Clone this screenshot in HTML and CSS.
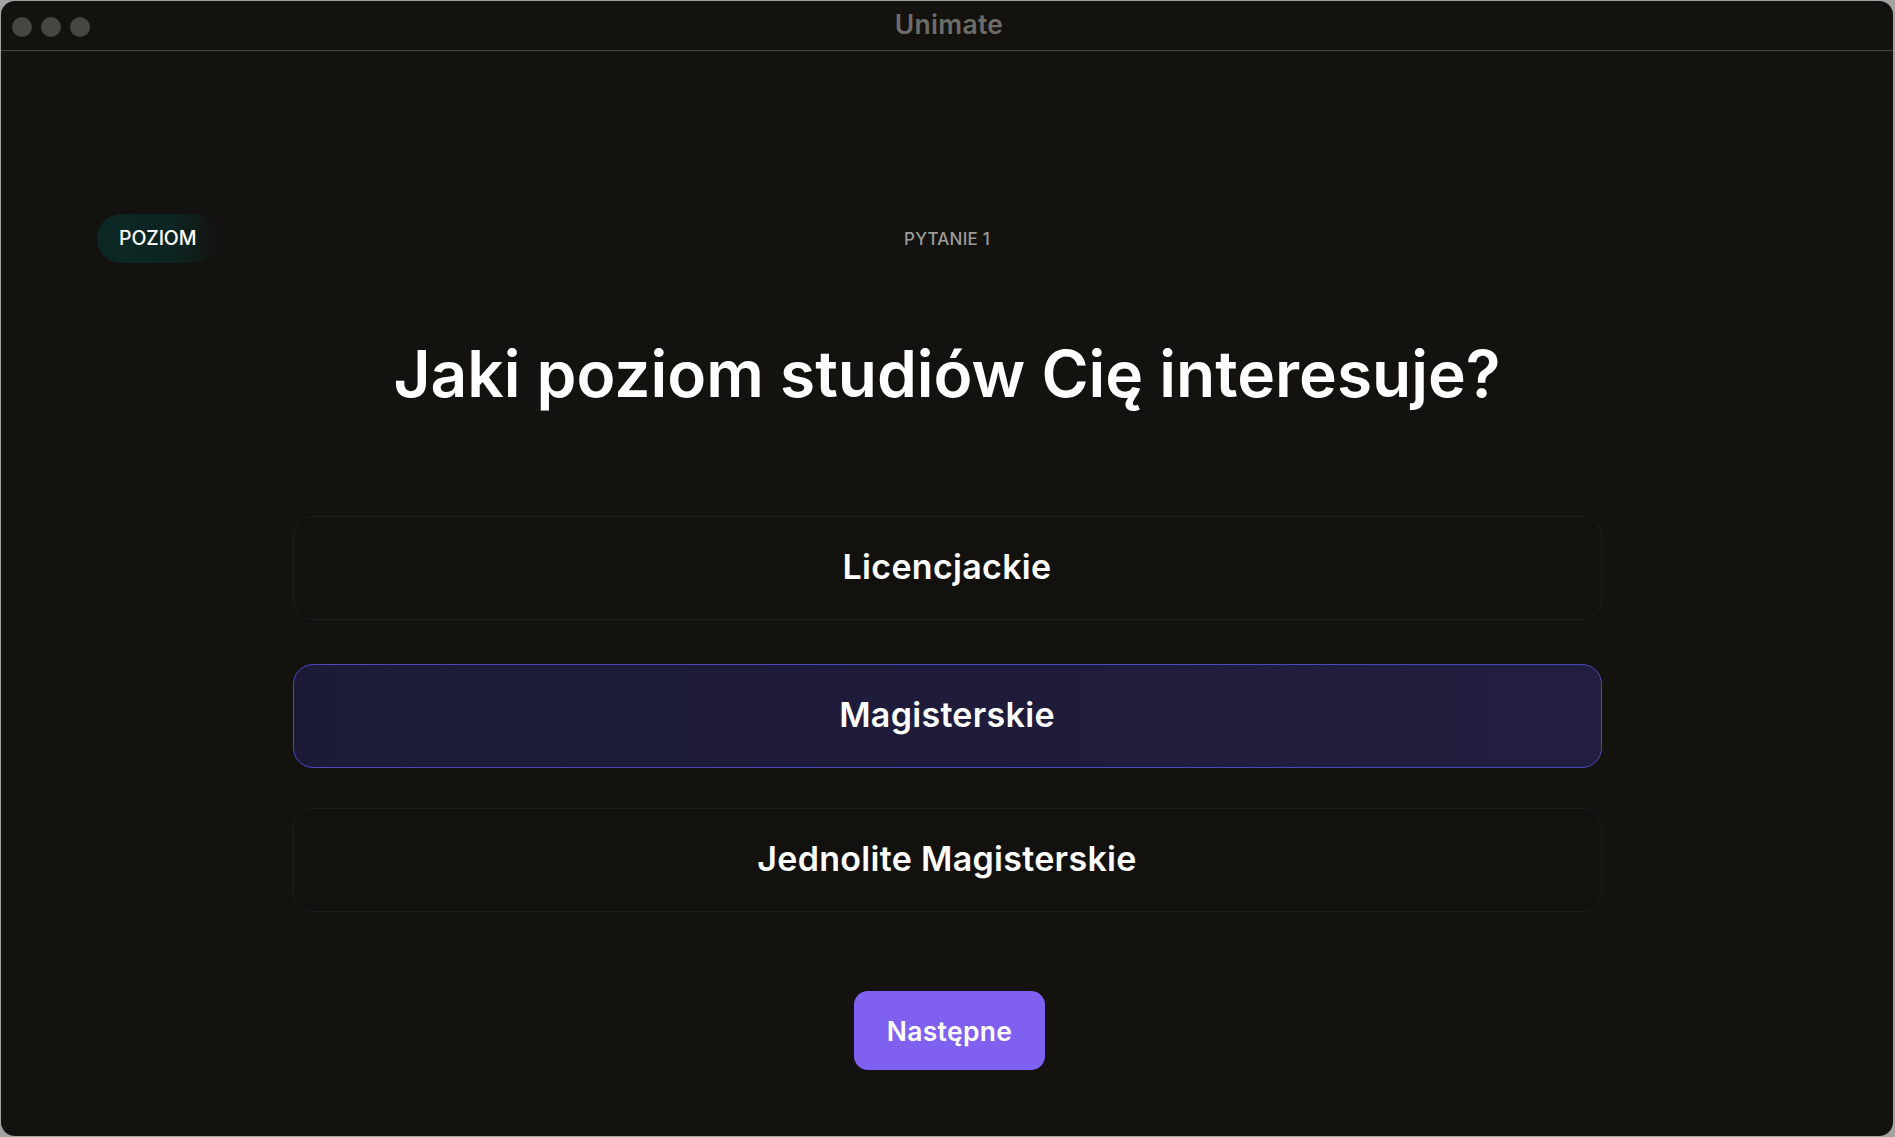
FILE: index.html
```html
<!DOCTYPE html>
<html lang="pl">
<head>
<meta charset="utf-8">
<title>Unimate</title>
<link rel="stylesheet" href="styles.css">
</head>
<body>
<div class="window">
  <header class="titlebar">
    <div class="lights">
      <span class="light"></span>
      <span class="light"></span>
      <span class="light"></span>
    </div>
    <div class="app-title">Unimate</div>
  </header>
  <main class="main">
    <div class="topline">
      <div class="pill">POZIOM</div>
      <div class="step">PYTANIE 1</div>
      <div></div>
    </div>
    <h1 class="question">Jaki poziom studiów Cię interesuje?</h1>
    <div class="options">
      <div class="option">Licencjackie</div>
      <div class="option selected">Magisterskie</div>
      <div class="option">Jednolite Magisterskie</div>
    </div>
    <div class="actions">
      <button class="next">Następne</button>
    </div>
  </main>
</div>
</body>
</html>
```

FILE: styles.css
```css
html, body {
  margin: 0;
  padding: 0;
  height: 100%;
}
body {
  background: #a3a3a1;
  font-family: Inter, "Noto Sans", sans-serif;
  padding: 1px 2px 1px 1px;
  box-sizing: border-box;
  height: 1137px;
  overflow: hidden;
}
.window {
  height: 1135px;
  background: #13120e;
  border-radius: 14px;
  overflow: hidden;
  display: flex;
  flex-direction: column;
}
.titlebar {
  height: 49px;
  border-bottom: 1px solid #45443f;
  display: grid;
  grid-template-columns: 1fr auto 1fr;
  align-items: center;
  padding: 0 11px;
}
.lights {
  display: flex;
  gap: 9px;
  margin-top: 3px;
}
.light {
  width: 20px;
  height: 20px;
  border-radius: 50%;
  background: #474642;
}
.app-title {
  color: #6d6c68;
  font-size: 26.5px;
  font-weight: 600;
  letter-spacing: 0.3px;
  margin-top: -3px;
  margin-left: 4px;
}
.main {
  padding: 163px 96px 0;
  display: flex;
  flex-direction: column;
  align-items: center;
}
.topline {
  align-self: stretch;
  display: grid;
  grid-template-columns: 1fr auto 1fr;
  align-items: center;
  height: 49px;
}
.pill {
  justify-self: start;
  height: 49px;
  line-height: 49px;
  padding: 0 23px 0 22px;
  border-radius: 25px;
  background: linear-gradient(90deg, #0b2825 0%, #0d2421 65%, rgba(19,18,14,0) 100%);
  color: #ffffff;
  font-size: 19.5px;
  font-weight: 500;
  letter-spacing: -0.1px;
}
.step {
  color: #9c9c9a;
  font-size: 17px;
  font-weight: 500;
  letter-spacing: 0.2px;
}
.question {
  margin: 73px 0 0;
  color: #ffffff;
  font-size: 64px;
  line-height: 76px;
  font-weight: 600;
  letter-spacing: 0;
  text-align: center;
}
.options {
  margin-top: 104px;
  width: 1309px;
  display: flex;
  flex-direction: column;
  gap: 40px;
}
.option {
  height: 102px;
  padding-bottom: 4px;
  box-sizing: content-box;
  height: 98px;
  border: 1px solid #1e1d1b;
  border-radius: 20px;
  background: #12110e;
  display: flex;
  align-items: center;
  justify-content: center;
  color: #ffffff;
  font-size: 34px;
  font-weight: 600;
  letter-spacing: 0.3px;
}
.option.selected {
  margin-top: 4px;
  height: 98px;
  border: 1.5px solid #4a47c2;
  background: linear-gradient(90deg, #1b1b38 0%, #1e1c3a 50%, #231e3f 100%);
}
.actions {
  margin-top: 79px;
  margin-left: 5px;
}
.next {
  width: 191px;
  height: 79px;
  border: none;
  border-radius: 14px;
  background: #7f60f0;
  color: #ffffff;
  font-family: Inter, "Noto Sans", sans-serif;
  font-size: 26.5px;
  font-weight: 600;
  letter-spacing: 0.3px;
  cursor: pointer;
}
```
